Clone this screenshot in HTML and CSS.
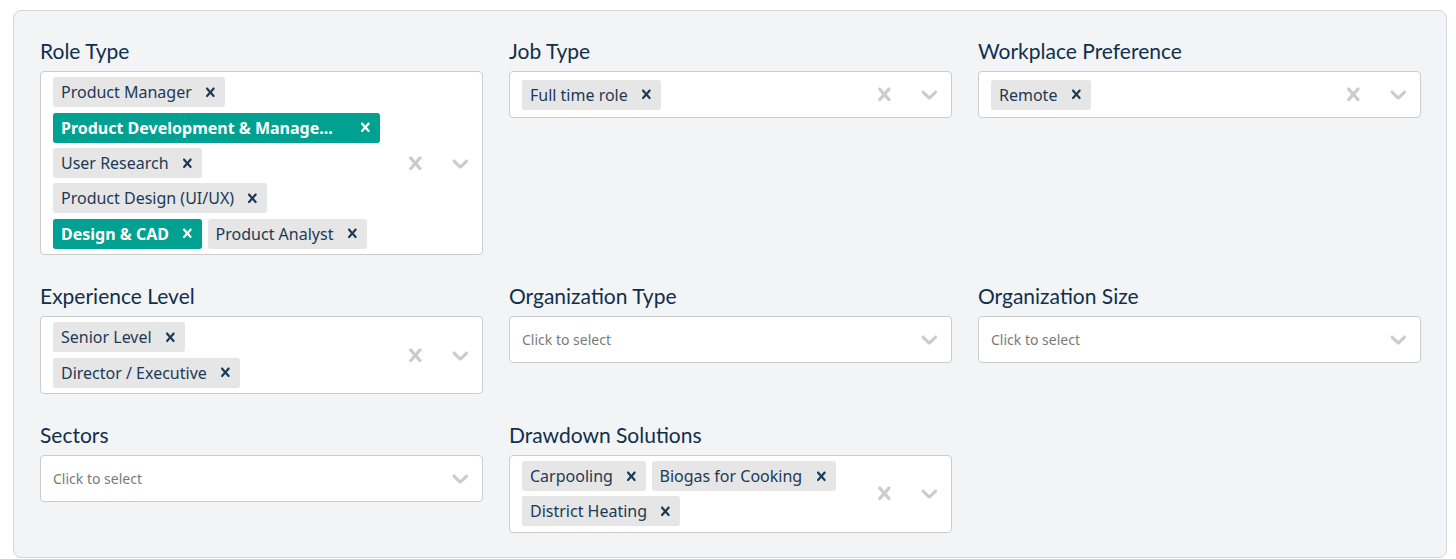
FILE: index.html
```html
<!DOCTYPE html>
<html lang="en">
<head>
<meta charset="utf-8">
<title>Filters</title>
<link rel="stylesheet" href="styles.css">
</head>
<body>
<svg width="0" height="0" class="defs" aria-hidden="true">
  <defs>
    <path id="cross" d="M14.348 14.849c-0.469 0.469-1.229 0.469-1.697 0l-2.651-3.030-2.651 3.029c-0.469 0.469-1.229 0.469-1.697 0-0.469-0.469-0.469-1.229 0-1.697l2.758-3.15-2.759-3.152c-0.469-0.469-0.469-1.228 0-1.697s1.228-0.469 1.697 0l2.652 3.031 2.651-3.031c0.469-0.469 1.228-0.469 1.697 0s0.469 1.229 0 1.697l-2.758 3.152 2.758 3.15c0.469 0.469 0.469 1.229 0 1.698z"/>
    <path id="chev" d="M4.516 7.548c0.436-0.446 1.043-0.481 1.576 0l3.908 3.747 3.908-3.747c0.533-0.481 1.141-0.446 1.574 0 0.436 0.445 0.408 1.197 0 1.615-0.406 0.418-4.695 4.502-4.695 4.502-0.217 0.223-0.502 0.335-0.787 0.335s-0.57-0.112-0.789-0.335c0 0-4.287-4.084-4.695-4.502s-0.436-1.17 0-1.615z"/>
  </defs>
</svg>
<div class="card">
  <div class="grid">
    <div class="field">
      <div class="label">Role Type</div>
      <div class="select">
        <div class="values">
          <span class="tag"><span class="tag-text">Product Manager</span><span class="tag-x"><svg viewBox="0 0 20 20"><use href="#cross"/></svg></span></span>
          <span class="tag tag-teal"><span class="tag-text tag-trunc">Product Development &amp; Manage...</span><span class="tag-x"><svg viewBox="0 0 20 20"><use href="#cross"/></svg></span></span>
          <span class="tag"><span class="tag-text">User Research</span><span class="tag-x"><svg viewBox="0 0 20 20"><use href="#cross"/></svg></span></span>
          <span class="tag"><span class="tag-text">Product Design (UI/UX)</span><span class="tag-x"><svg viewBox="0 0 20 20"><use href="#cross"/></svg></span></span>
          <span class="tag tag-teal"><span class="tag-text">Design &amp; CAD</span><span class="tag-x"><svg viewBox="0 0 20 20"><use href="#cross"/></svg></span></span>
          <span class="tag"><span class="tag-text">Product Analyst</span><span class="tag-x"><svg viewBox="0 0 20 20"><use href="#cross"/></svg></span></span>
        </div>
        <div class="indicators">
          <span class="ind ind-clear"><svg viewBox="0 0 20 20"><use href="#cross"/></svg></span>
          <span class="ind ind-chev"><svg viewBox="0 0 20 20"><use href="#chev"/></svg></span>
        </div>
      </div>
    </div>

    <div class="field">
      <div class="label">Job Type</div>
      <div class="select">
        <div class="values">
          <span class="tag"><span class="tag-text">Full time role</span><span class="tag-x"><svg viewBox="0 0 20 20"><use href="#cross"/></svg></span></span>
        </div>
        <div class="indicators">
          <span class="ind ind-clear"><svg viewBox="0 0 20 20"><use href="#cross"/></svg></span>
          <span class="ind ind-chev"><svg viewBox="0 0 20 20"><use href="#chev"/></svg></span>
        </div>
      </div>
    </div>

    <div class="field">
      <div class="label">Workplace Preference</div>
      <div class="select">
        <div class="values">
          <span class="tag"><span class="tag-text">Remote</span><span class="tag-x"><svg viewBox="0 0 20 20"><use href="#cross"/></svg></span></span>
        </div>
        <div class="indicators">
          <span class="ind ind-clear"><svg viewBox="0 0 20 20"><use href="#cross"/></svg></span>
          <span class="ind ind-chev"><svg viewBox="0 0 20 20"><use href="#chev"/></svg></span>
        </div>
      </div>
    </div>

    <div class="field">
      <div class="label">Experience Level</div>
      <div class="select">
        <div class="values">
          <span class="tag"><span class="tag-text">Senior Level</span><span class="tag-x"><svg viewBox="0 0 20 20"><use href="#cross"/></svg></span></span>
          <span class="tag"><span class="tag-text">Director / Executive</span><span class="tag-x"><svg viewBox="0 0 20 20"><use href="#cross"/></svg></span></span>
        </div>
        <div class="indicators">
          <span class="ind ind-clear"><svg viewBox="0 0 20 20"><use href="#cross"/></svg></span>
          <span class="ind ind-chev"><svg viewBox="0 0 20 20"><use href="#chev"/></svg></span>
        </div>
      </div>
    </div>

    <div class="field">
      <div class="label">Organization Type</div>
      <div class="select">
        <div class="values">
          <span class="placeholder">Click to select</span>
        </div>
        <div class="indicators">
          <span class="ind ind-chev"><svg viewBox="0 0 20 20"><use href="#chev"/></svg></span>
        </div>
      </div>
    </div>

    <div class="field">
      <div class="label">Organization Size</div>
      <div class="select">
        <div class="values">
          <span class="placeholder">Click to select</span>
        </div>
        <div class="indicators">
          <span class="ind ind-chev"><svg viewBox="0 0 20 20"><use href="#chev"/></svg></span>
        </div>
      </div>
    </div>

    <div class="field">
      <div class="label">Sectors</div>
      <div class="select">
        <div class="values">
          <span class="placeholder">Click to select</span>
        </div>
        <div class="indicators">
          <span class="ind ind-chev"><svg viewBox="0 0 20 20"><use href="#chev"/></svg></span>
        </div>
      </div>
    </div>

    <div class="field">
      <div class="label">Drawdown Solutions</div>
      <div class="select">
        <div class="values">
          <span class="tag"><span class="tag-text">Carpooling</span><span class="tag-x"><svg viewBox="0 0 20 20"><use href="#cross"/></svg></span></span>
          <span class="tag"><span class="tag-text">Biogas for Cooking</span><span class="tag-x"><svg viewBox="0 0 20 20"><use href="#cross"/></svg></span></span>
          <span class="tag"><span class="tag-text">District Heating</span><span class="tag-x"><svg viewBox="0 0 20 20"><use href="#cross"/></svg></span></span>
        </div>
        <div class="indicators">
          <span class="ind ind-clear"><svg viewBox="0 0 20 20"><use href="#cross"/></svg></span>
          <span class="ind ind-chev"><svg viewBox="0 0 20 20"><use href="#chev"/></svg></span>
        </div>
      </div>
    </div>
  </div>
</div>
</body>
</html>
```

FILE: styles.css
```css
html, body {
  margin: 0;
  padding: 0;
  background: #ffffff;
}

.defs {
  position: absolute;
  width: 0;
  height: 0;
  overflow: hidden;
}

.card {
  box-sizing: border-box;
  width: 1434px;
  margin: 10px 0 0 13px;
  padding: 28px 26px 24px 26px;
  background: #f3f4f6;
  border: 1px solid #cfd6dd;
  border-radius: 8px;
}

.grid {
  display: grid;
  grid-template-columns: repeat(3, 443px);
  column-gap: 26px;
  row-gap: 29px;
  align-items: start;
}

.field {
  display: flex;
  flex-direction: column;
}

.label {
  font-family: Lato, "Noto Sans", sans-serif;
  font-size: 21px;
  line-height: 24px;
  color: #0f2f4c;
  margin-bottom: 8px;
}

.select {
  box-sizing: border-box;
  min-height: 47px;
  display: flex;
  align-items: center;
  background: #ffffff;
  border: 1px solid #cccccc;
  border-radius: 4px;
}

.values {
  flex: 1;
  min-width: 0;
  display: flex;
  flex-wrap: wrap;
  align-items: center;
  padding: 2.67px 14px 2.67px 9.33px;
}

.tag {
  display: flex;
  height: 30px;
  margin: 2.67px;
  background: #e6e6e6;
  border-radius: 2.67px;
  color: #1c3a56;
}

.tag-text {
  font-family: "Noto Sans", sans-serif;
  font-size: 16px;
  line-height: 31px;
  padding: 0 4px 0 8px;
  white-space: nowrap;
}

.tag-trunc {
  padding-right: 18px;
}

.tag-x {
  width: 29.33px;
  display: flex;
  align-items: center;
  justify-content: center;
}

.tag-x svg {
  width: 18.67px;
  height: 18.67px;
  fill: #1c3a56;
}

.tag-teal {
  background: #00a190;
  color: #ffffff;
}

.tag-teal .tag-text {
  font-weight: 700;
}

.tag-teal .tag-x svg {
  fill: #ffffff;
}

.placeholder {
  margin: 0 2.67px;
  font-family: "Noto Sans", sans-serif;
  font-size: 14px;
  color: #7a7a7a;
}

.indicators {
  display: flex;
  align-items: center;
  align-self: stretch;
}

.ind {
  display: flex;
  align-items: center;
  justify-content: center;
}

.ind-clear {
  width: 45px;
}

.ind-chev {
  width: 44px;
}

.ind svg {
  width: 26.67px;
  height: 26.67px;
  fill: #cccccc;
}
```
